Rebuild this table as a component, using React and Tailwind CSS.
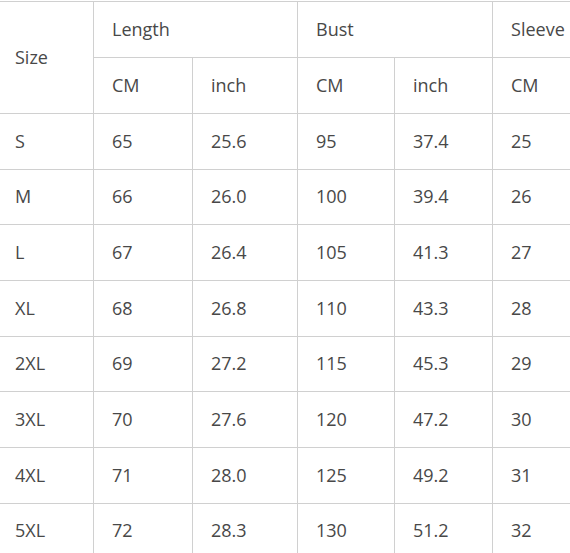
import React from "react";

const rows = [
  ["S", "65", "25.6", "95", "37.4", "25"],
  ["M", "66", "26.0", "100", "39.4", "26"],
  ["L", "67", "26.4", "105", "41.3", "27"],
  ["XL", "68", "26.8", "110", "43.3", "28"],
  ["2XL", "69", "27.2", "115", "45.3", "29"],
  ["3XL", "70", "27.6", "120", "47.2", "30"],
  ["4XL", "71", "28.0", "125", "49.2", "31"],
  ["5XL", "72", "28.3", "130", "51.2", "32"],
];

const cell = "border border-[#d0d0d0] pl-[18px] text-left align-middle font-normal";

export default function App() {
  return (
    <div className="w-[570px] h-[553px] overflow-hidden bg-white pt-px">
      <table
        className="ml-[-4px] w-[594px] border-collapse table-fixed text-[18px] text-[#484848]"
        style={{ fontFamily: '"Open Sans", "Noto Sans", sans-serif' }}
      >
        <colgroup>
          <col className="w-[97px]" />
          <col className="w-[99px]" />
          <col className="w-[105px]" />
          <col className="w-[97px]" />
          <col className="w-[98px]" />
          <col className="w-[98px]" />
        </colgroup>
        <thead>
          <tr className="h-[56px]">
            <th rowSpan={2} className={cell}>Size</th>
            <th colSpan={2} className={cell}>Length</th>
            <th colSpan={2} className={cell}>Bust</th>
            <th className={cell}>Sleeve</th>
          </tr>
          <tr className="h-[56px]">
            <th className={cell}>CM</th>
            <th className={cell}>inch</th>
            <th className={cell}>CM</th>
            <th className={cell}>inch</th>
            <th className={cell}>CM</th>
          </tr>
        </thead>
        <tbody>
          {rows.map((r) => (
            <tr key={r[0]} className="h-[55.67px]">
              {r.map((v, i) => (
                <td key={i} className={cell}>{v}</td>
              ))}
            </tr>
          ))}
        </tbody>
      </table>
    </div>
  );
}
